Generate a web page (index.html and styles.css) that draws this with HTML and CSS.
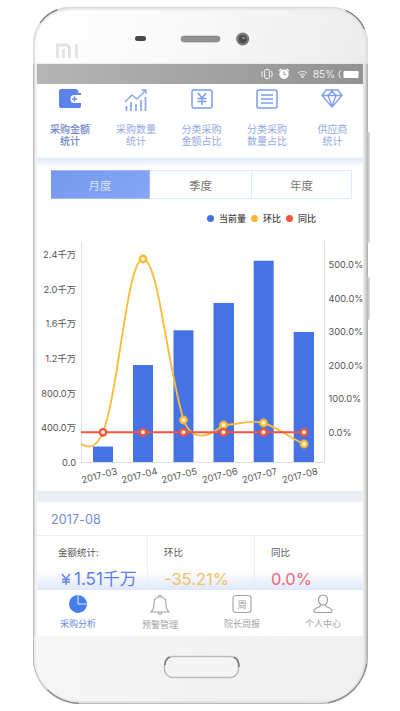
FILE: index.html
```html
<!DOCTYPE html>
<html lang="zh-CN">
<head>
<meta charset="utf-8">
<title>采购分析</title>
<link rel="stylesheet" href="styles.css">
</head>
<body>
<div class="phone">
  <span class="side-key volume"></span>
  <span class="side-key power"></span>
  <svg class="edge" viewBox="0 0 335 697" fill="none">
    <path d="M7.100 16A36.500 36.500 0 0 1 24.500 2.700" stroke="#777" stroke-width="1.300"/>
    <path d="M313 3.500A36.500 36.500 0 0 1 331.500 22" stroke="#777" stroke-width="1.300"/>
    <path d="M14.400 682.600A47.500 47.500 0 0 0 46 696.300" stroke="#888" stroke-width="1.200"/>
    <path d="M333.800 657A47.500 47.500 0 0 1 295 695.800" stroke="#8a8a8a" stroke-width="1.300"/>
  </svg>
  <div class="bezel">
    <svg viewBox="0 0 335 57" width="335" height="57">
      <path d="M24.500 51V38H32Q36.500 38 36.500 42.500V51M30.500 42V51M43.500 37V51" fill="none" stroke="#e2e2e2" stroke-width="2.800"/>
      <rect x="102" y="29" width="11" height="5" rx="2.500" fill="#484848"/>
      <rect x="148" y="29" width="39" height="6" rx="3" fill="#929292" stroke="#777" stroke-width=".5"/>
      <circle cx="209.700" cy="32" r="6.500" fill="#777"/>
      <circle cx="209.700" cy="32" r="4" fill="#484d4f"/>
      <circle cx="210.500" cy="31" r="1.300" fill="#899"/>
    </svg>
  </div>
  <main class="screen">
    <div class="status">
      <svg viewBox="0 0 12 12" width="12" height="12" fill="none" stroke="#f2f2f2"><rect x="3.700" y="1.500" width="4.600" height="9" rx="1"/><path d="M1.500 3Q0 6 1.500 9M10.500 3Q12 6 10.500 9"/></svg>
      <svg class="alarm" viewBox="0 0 12 12" width="12" height="12"><circle cx="6" cy="6.300" r="4.700" fill="#fff"/><path d="M1 3L3.500 1M11 3L8.500 1" stroke="#fff" stroke-width="1.500"/><path d="M6 3.500V6.500H8" fill="none" stroke="#999"/></svg>
      <svg class="wifi" viewBox="0 0 12 10" width="11" height="10" fill="none" stroke="#e6e6e6" stroke-width="1.300"><path d="M1 4Q6 0 11 4M3 6Q6 4 9 6"/><circle cx="6" cy="8" r=".8" fill="#e6e6e6"/></svg>
      <span class="percent">85%</span>
      <svg viewBox="0 0 21 9" width="21" height="9"><path d="M3 1Q1 1 1 4.500Q1 8 3 8" fill="none" stroke="#eee"/><rect x="5.500" y="1" width="15" height="7" rx="1" fill="#fff"/></svg>
    </div>
    <nav class="modules">
      <a class="module current">
        <svg viewBox="0 0 22 20" width="22" height="20"><path d="M2 0H17Q19 0 19.500 4H22V6H15Q11.500 6 11.500 10T15 14H22V17Q22 19 20 19H2Q0 19 0 17V2Q0 0 2 0Z" fill="#5c83ec"/><path d="M13 10H18M15.500 7.500V12.500" stroke="#6c90f0" stroke-width="1.500"/></svg>
        <span>采购金额<br>统计</span>
      </a>
      <a class="module">
        <svg viewBox="0 0 24 22" width="24" height="22" fill="none" stroke="#88a8f4" stroke-width="1.400"><path d="M1 13L8 6L13 10L22 1M17.500 1H22V5"/><path d="M2.500 17V22M7 13V22M12 15V22M17 11V22M21.500 8V22" stroke-width="1.700"/></svg>
        <span>采购数量<br>统计</span>
      </a>
      <a class="module">
        <svg viewBox="0 0 22 20" width="22" height="20" fill="none" stroke="#7b9df3" stroke-width="1.500"><rect x="1" y="1" width="20" height="18" rx="2"/><path d="M7 4L11 9L15 4M6.500 9.500H15.500M6.500 12.500H15.500M11 9V16"/></svg>
        <span>分类采购<br>金额占比</span>
      </a>
      <a class="module">
        <svg viewBox="0 0 22 20" width="22" height="20" fill="none" stroke="#7b9df3" stroke-width="1.500"><rect x="1" y="1" width="20" height="18" rx="2"/><path d="M5 6H17M5 10H17M5 14H17"/></svg>
        <span>分类采购<br>数量占比</span>
      </a>
      <a class="module">
        <svg viewBox="0 0 22 20" width="22" height="20" fill="none" stroke="#7b9df3" stroke-width="1.300" stroke-linejoin="round"><path d="M5 1H17L21 6.500L11 18L1 6.500ZM1 6.500H21M7 6.500L11 17L15 6.500L11 2Z"/></svg>
        <span>供应商<br>统计</span>
      </a>
    </nav>
    <div class="divider-glow"></div>
    <section class="report">
      <div class="tabs">
        <span class="tab selected">月度</span><span class="tab">季度</span><span class="tab">年度</span>
      </div>
      <div class="legend">
        <span class="key current-key">当前量</span><span class="key chain-key">环比</span><span class="key year-key">同比</span>
      </div>
      <svg class="chart" viewBox="37 235 326 256" width="326" height="256">
        <path d="M81.500 241V462.500H324.500V241" fill="none" stroke="#dedfe2"/>
        <g class="axis left">
          <text x="76" y="258">2.4千万</text><text x="76" y="293">2.0千万</text><text x="76" y="327">1.6千万</text><text x="76" y="362">1.2千万</text><text x="76" y="396.500">800.0万</text><text x="76" y="431">400.0万</text><text x="76" y="465.500">0.0</text>
        </g>
        <g class="axis">
          <text x="328.500" y="268">500.0%</text><text x="328.500" y="301.500">400.0%</text><text x="328.500" y="335">300.0%</text><text x="328.500" y="368.500">200.0%</text><text x="328.500" y="402">100.0%</text><text x="328.500" y="435.500">0.0%</text>
        </g>
        <g fill="#4672e3">
          <rect x="93" y="446.500" width="20" height="15.500"/><rect x="133" y="365" width="20" height="97"/><rect x="173.500" y="330.300" width="20" height="131.700"/><rect x="213.500" y="303" width="20.500" height="159"/><rect x="253.700" y="260.700" width="20" height="201.300"/><rect x="293.700" y="332" width="20.300" height="130"/>
        </g>
        <g class="axis month">
          <text transform="translate(82.500 483.500) rotate(-15)">2017-03</text><text transform="translate(122.500 483.500) rotate(-15)">2017-04</text><text transform="translate(162.500 483.500) rotate(-15)">2017-05</text><text transform="translate(203 483.500) rotate(-15)">2017-06</text><text transform="translate(243 483.500) rotate(-15)">2017-07</text><text transform="translate(283 483.500) rotate(-15)">2017-08</text>
        </g>
        <path d="M81 444C90 449 97 447 103 432C119 391 127 259 143 259C158 259 166 359 183.500 420C193 444 210 436 223.500 425C238 425 249 419 263.500 423C279 428 290 438 304 444" fill="none" stroke="#f7bd3c" stroke-width="1.900"/>
        <g class="dots chain"><circle cx="143" cy="259" r="3.200"/><circle cx="183.500" cy="420" r="3.200"/><circle cx="223.500" cy="425" r="3.200"/><circle cx="263.500" cy="423" r="3.200"/><circle cx="304" cy="444" r="3.200"/></g>
        <path d="M81 432.300H304" stroke="#f25541" stroke-width="1.900"/>
        <g class="dots year"><circle cx="103" cy="432.300" r="3.200"/><circle cx="143" cy="432.300" r="3.200"/><circle cx="183.500" cy="432.300" r="3.200"/><circle cx="223.500" cy="432.300" r="3.200"/><circle cx="263.500" cy="432.300" r="3.200"/><circle cx="304" cy="432.300" r="3.200"/></g>
      </svg>
    </section>
    <h2 class="period">2017-08</h2>
    <section class="stats">
      <div class="stat amount"><span>金额统计:</span><strong><svg class="yen" viewBox="0 0 10 12" width="10" height="12" fill="none" stroke="#5a7fe9" stroke-width="1.300"><path d="M1 1L5 6L9 1M1 6.500H9M1 9H9M5 6V12"/></svg>1.51千万</strong></div>
      <div class="stat chain-stat"><span>环比</span><strong>-35.21%</strong></div>
      <div class="stat year-stat"><span>同比</span><strong>0.0%</strong></div>
    </section>
    <nav class="bottom">
      <a class="active"><svg viewBox="0 0 20 20" width="20" height="20"><path d="M9 1A9 9 0 1 0 19 11H9Z" fill="#467cec"/><path d="M9 1V11H19A9.500 9.500 0 0 0 9 1Z" fill="#467cec"/><path d="M10 1V10H19" fill="none" stroke="#e5edff"/></svg><span>采购分析</span></a>
      <a class="alerts"><svg viewBox="0 0 20 22" width="20" height="22" fill="none" stroke="#a4a7aa" stroke-width="1.200"><path d="M1 18H19Q16 15 16 12V9Q16 3 10 3T4 9V12Q4 15 1 18ZM8.500 3Q8.500 1 10 1T11.500 3M8 18.500Q10 22 12 18.500"/></svg><span>预警管理</span></a>
      <a><svg class="calendar" viewBox="0 0 20 20" width="20" height="20"><rect x="1" y="1.500" width="18" height="17" rx="3" fill="none" stroke="#a4a7aa" stroke-width="1.200"/><text x="10" y="13.500" text-anchor="middle">周</text></svg><span>院长周报</span></a>
      <a><svg viewBox="0 0 20 20" width="20" height="20" fill="none" stroke="#999c9f" stroke-width="1.200"><ellipse cx="10" cy="6" rx="4.500" ry="5"/><path d="M7.500 10.500Q8 12 6 13Q1 14.500 1 17Q1 18.500 3 18.500H17Q19 18.500 19 17Q19 14.500 14 13Q12 12 12.500 10.500"/></svg><span>个人中心</span></a>
    </nav>
  </main>
  <div class="chin"><svg viewBox="0 0 78 24" width="78" height="24"><rect x="1.500" y="1.500" width="74" height="21" rx="8.500" fill="#f5f5f5" stroke="#bbb" stroke-width="1.500"/><path d="M2 10Q2 4 7 2M71 2Q76 4 76 12" stroke="#777" stroke-width="1.500" fill="none"/></svg></div>
</div>
</body>
</html>
```
FILE: styles.css
```css
* { box-sizing: border-box; }
body { margin: 0; padding: 7px 0 0 33px; width: 400px; height: 711px; overflow: hidden; background: #fff; font-family: Inter, "Noto Sans CJK SC", sans-serif; }
.phone { position: relative; width: 335px; height: 697px; border-radius: 37px 37px 48px 48px; background: linear-gradient(90deg, #aeb0b1 0, #eee 2px, #f4f4f4 5px, #f4f4f4 329px, #dedede 332px, #aaa 335px); box-shadow: inset 0 0 2px #aaa; }
.edge { position: absolute; inset: 0; width: 335px; height: 697px; pointer-events: none; }
.side-key { position: absolute; left: 334px; width: 3px; background: linear-gradient(90deg, #b8b8b8, #ddd); border-radius: 0 2px 2px 0; }
.volume { top: 125px; height: 111px; }
.power { top: 270px; height: 43px; }
.bezel { height: 57px; border-radius: 37px 37px 0 0; border-top: 1px solid #d8d8d8; background: linear-gradient(100deg, #fff, #f8f8f8 50%, #ececec); box-shadow: inset 0 2px 1px #e7e7e7, inset 2px 0 2px #ddd, inset -2px 0 2px #ddd; }
.bezel svg { display: block; margin-top: -1px; }
.screen { width: 326px; height: 572px; margin-left: 4px; background: #fff; overflow: hidden; }
.status { height: 20px; display: flex; align-items: center; justify-content: flex-end; padding-right: 4px; background: linear-gradient(90deg, #b5b5b5, #a2a2a2 55%, #929292); }
.alarm { margin-left: 5px; }
.wifi { margin-left: 7px; }
.percent { color: #eee; font-size: 10px; margin: 0 3px 0 5px; }
.modules { height: 74px; display: grid; grid-template-columns: 66px 66px 65px 66px 63px; padding: 5px 0 0; }
.module { display: flex; flex-direction: column; align-items: center; justify-content: space-between; height: 58px; font-size: 10px; line-height: 12px; color: #94a9e4; text-align: center; }
.modules .module:last-child span { margin-left: 2px; }
.current { color: #7186cf; font-weight: 500; }
.divider-glow { height: 9px; background: linear-gradient(#dce8fa, #edf4fc 50%, #fff); }
.report { height: 321px; }
.tabs { width: 301px; height: 29px; margin: 3px 0 0 14px; display: grid; grid-template-columns: 99px 102px 100px; }
.tab { display: flex; align-items: center; justify-content: center; font-size: 11.5px; color: #777; border: 1px solid #dfedf9; border-left-width: 0; }
.tab.selected { color: #d8e2ff; background: linear-gradient(145deg, #7599ee, #86a6f6); border-color: #9eb8f5; }
.legend { height: 36px; display: flex; padding: 11px 0 8px 170px; font-size: 9px; line-height: 17px; color: #444; font-weight: 500; }
.key { display: flex; align-items: center; gap: 5px; width: 44px; white-space: nowrap; }
.key::before { content: ""; width: 7px; height: 7px; border-radius: 50%; background: #456fe0; }
.chain-key { width: 35px; }
.chain-key::before { background: #f8b832; }
.year-key::before { background: #f65340; }
.chart { display: block; }
.axis { font-size: 9.3px; fill: #555; }
.left { text-anchor: end; }
.month { font-size: 9.3px; }
.dots { stroke-width: 2.4; fill: #fff3dd; }
.chain { stroke: #f7b936; }
.year { stroke: #f25541; }
.period { height: 45px; margin: 0; padding: 1px 0 0 14px; border-top: 11px solid #e9eff4; border-bottom: 1px solid #e9f1f5; font-size: 12.5px; line-height: 33px; font-weight: 400; color: #728ce3; letter-spacing: .1px; }
.stats { height: 54px; display: grid; grid-template-columns: 111px 107px 108px; background: linear-gradient(#fff 65%, #e1e7fb); }
.stat { border-right: 1px solid #e7f0f7; padding: 8px 0 0 16px; color: #555; font-size: 9.5px; line-height: 18px; overflow: hidden; }
.amount { padding-left: 21px; }
.stat:last-child { border: 0; }
.stat > span, .stat strong { display: block; }
.stat strong { margin-top: 7px; line-height: 21px; font-size: 16.5px; font-weight: 400; white-space: nowrap; color: #5a7fe9; }
.amount strong { font-size: 17px; }
.yen { margin: 0 3px 0 3px; }
.stat.chain-stat strong { color: #eec064; }
.stat.year-stat strong { color: #f06575; }
.bottom { height: 46px; display: grid; grid-template-columns: 82px 82px 82px 80px; background: #fff; }
.bottom a { display: flex; flex-direction: column; align-items: center; padding-top: 4px; font-size: 9px; line-height: 14px; color: #a3a5a8; }
.bottom a > span { margin-top: 3px; }
.bottom .active { color: #668ce5; }
.alerts svg { margin-bottom: -1px; }
.calendar text { font-size: 9px; fill: #999; }
.chin { height: 68px; margin-right: 1px; border-radius: 0 0 46px 46px; padding: 19px 0 0 129px; background: linear-gradient(90deg, #f6f6f6, #f0f0f0); border: 1px solid #bbb; border-top: 0; box-shadow: inset 0 -3px 1px -1px #e2e2e2, inset -3px 0 1px -1px #ddd, inset 3px 0 1px -1px #eee; }
```
